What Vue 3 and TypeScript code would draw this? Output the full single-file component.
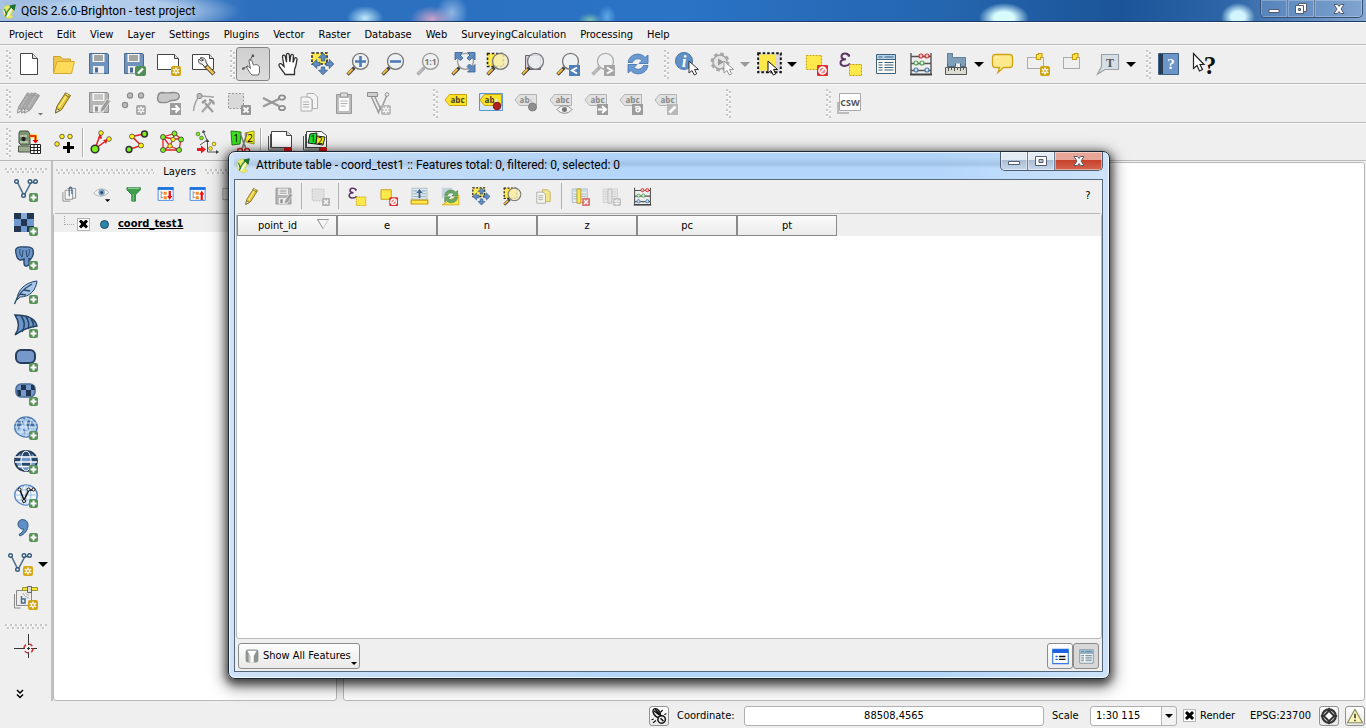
<script setup lang="ts">
import { ref } from 'vue'

interface Tool {
  icon: string
  label: string
  arrow?: boolean
  dim?: boolean
  active?: boolean
  sep?: boolean
}

const SANS = 'font-family="Open Sans, sans-serif"'

// Small badges placed in the bottom right corner of a 24px icon
const plus = '<rect x="15" y="15" width="9" height="9" rx="2" fill="#579157"/><path d="M19.500 16.500v6M16.500 19.500h6" stroke="#fff" stroke-width="2"/>'
const star = (c: string) =>
  `<rect x="14" y="14" width="10" height="10" rx="2" fill="${c}"/><path d="M19 15.500v7M15.800 17.200l6.400 3.600M22.200 17.200l-6.400 3.600" stroke="#fff" stroke-width="1.500"/><circle cx="19" cy="19" r="1" fill="${c}"/>`
const cross = (c: string) =>
  `<rect x="14" y="14" width="10" height="10" rx="1" fill="${c}"/><path d="M16.500 16.500l5 5M21.500 16.500l-5 5" stroke="#fff" stroke-width="1.800"/>`
const forbid =
  '<rect x="13" y="13" width="11" height="11" rx="1" fill="#dc3030"/><circle cx="18.500" cy="18.500" r="3.600" fill="#ee8a8a" stroke="#fff" stroke-width="1.500"/><path d="M16 21l5-5" stroke="#fff" stroke-width="1.500"/>'
const cursor = (x: number, y: number, c: string) =>
  `<path transform="translate(${x} ${y})" d="M0 0v12l3-2.500 2.300 4.500 2.400-1.200-2.200-4.300h4z" fill="#fff" stroke="${c}"/>`
const lens = (handle: string, rim: string, inner = '', fill = '#eef1f1') =>
  `<path d="M8.500 15.500L1.500 22.500" stroke="#333" stroke-width="3.400" opacity="${handle === '#bbb' ? 0.35 : 0.9}"/><path d="M6.500 17L1.800 21.800" stroke="${handle}" stroke-width="2"/><circle cx="14.500" cy="9.300" r="8" fill="${fill}" fill-opacity=".82" stroke="${rim}" stroke-width="1.300"/>${inner}`
const arrows4 = (c: string, o: string) => {
  const a = 'M0-10.800l4.500 4.600h-2.800v3.200h-3.400v-3.200h-2.800z'
  return [0, 90, 180, 270].map(r => `<path transform="translate(12 12) rotate(${r})" d="${a}" fill="${c}" stroke="${o}" stroke-width=".8"/>`).join('')
}
const pencil = (c: string, l: string, o: string) =>
  `<path d="M4.500 22l1.300-6.500L14.500 1.800l5 2.700-9 14.200z" fill="${c}" stroke="${o}"/><path d="M8 16.500L16.500 3" stroke="${l}" stroke-width="1.600"/><path d="M4.500 22l.9-4.700 3.500 2.100z" fill="#eee" stroke="${o}"/><path d="M13.500 3.500l4.700 2.700" stroke="${o}"/>`
const floppy = (c: string, d: string, lab: string) =>
  `<path d="M2.500 1.500h18l1 1v19h-19z" fill="${c}" stroke="${d}"/><path d="M5.500 2h12v8h-12z" fill="#f6f6f3"/><path d="M7 4h9M7 6h9M7 8h9" stroke="${lab}"/><path d="M6 14h11v7.500H6z" fill="#eee"/><path d="M8 15.500h3v5H8z" fill="${d}"/>`
const tag = (c: string, o: string, t: string, s: string, shown = 'abc') =>
  `<path d="M1 9L5.500 3.500h17v11h-17z" fill="${c}" stroke="${o}"/><text x="${shown === 'abc' ? 13.500 : 10.500}" y="11.500" font-size="8" font-weight="700" text-anchor="middle" fill="${t}" ${SANS}>${shown}</text>${s}`
const pages = (c: string, f: string) =>
  `<path d="M4 6h8l3 3v11H4z" fill="${f}" stroke="${c}"/><path d="M10 2.500h7l3.500 3.500v11.500H15.500V9l-3-3H10z" fill="${f}" stroke="${c}"/><path d="M6 11h6M6 13.500h6M6 16h6" stroke="${c}"/>`
const vee = '<path d="M3.500 4.500L10 17.500 17 4.500H21" fill="none" stroke="#4d6b88" stroke-width="1.500"/><g fill="#fff" stroke="#33587c" stroke-width="1.400"><circle cx="2.500" cy="3.500" r="1.800"/><circle cx="9.500" cy="17.500" r="1.800"/><circle cx="16" cy="3.500" r="1.800"/><circle cx="21.500" cy="3.500" r="1.800"/></g>'
const abacus = '<path d="M2 1v21M22 1v21M2 4.500h20M2 11.500h20M2 18.500h20" fill="none" stroke="#555" stroke-width="1.400"/><path d="M1 22.500h22" stroke="#444" stroke-width="2"/><g stroke-width="1.200"><g fill="#f8caca" stroke="#c33"><circle cx="12" cy="4" r="2"/><circle cx="18" cy="4" r="2"/></g><g fill="#dbf3d8" stroke="#5a9f58"><circle cx="7" cy="11" r="2"/><circle cx="13" cy="11" r="2"/></g><g fill="#cfe2f2" stroke="#4d7ba3"><circle cx="7" cy="18" r="2"/><circle cx="18" cy="18" r="2"/></g></g>'
const tableIcon = (h: string, c: string) =>
  `<path d="M2.500 2.500h19v19h-19z" fill="#fbfbf8" stroke="${c}"/><path d="M3 3h18v4H3z" fill="${h}"/><path d="M4.500 5h4M10.500 5h9" stroke="${c}"/><path d="M3 7.500h18" stroke="${c}"/><path d="M4.500 10.500h4M10.500 10.500h9M4.500 13h4M10.500 13h9M4.500 15.500h4M10.500 15.500h9M4.500 18h4M10.500 18h9" stroke="${c}" stroke-width="1.200"/>`
const epsilon = '<path d="M10 3.500C8 .500 2.500 1 2.500 4.500c0 2 2 2.800 4.500 2.800-3 0-5.500 1-5.500 3.500 0 4 7 4 9.500.700" fill="none" stroke="#5c3566" stroke-width="2"/><circle cx="9.800" cy="3.600" r="1.300" fill="#5c3566"/>'
const swirl = (c: string, d: string) =>
  `<path d="M2 10.500C3 4 9 1 14.500 2.500c2 .5 3.500 1.500 4.500 3L22 3v8.500h-9l3-3c-3-3-8-2-9.500 2z" fill="${c}" stroke="${d}" stroke-width=".8"/><path d="M22 13.500c-1 6.500-7 9.500-12.500 8-2-.5-3.500-1.500-4.500-3L2 21v-8.500h9l-3 3c3 3 8 2 9.500-2z" fill="${c}" stroke="${d}" stroke-width=".8"/>`
const nodes = (pts: number[][], c: string, r: number, w = 1) =>
  pts.map(p => `<circle cx="${p[0]}" cy="${p[1]}" r="${r}" fill="${c}" stroke="#333" stroke-width="${w}"/>`).join('')
const globe = (f: string, s: string, lines: string) =>
  `<ellipse cx="12" cy="11" rx="11.300" ry="10" fill="${f}" stroke="${s}" stroke-width="1.400"/><path d="M1 11h22M3 6h18M3 16h18M12 1v20" stroke="${lines}" fill="none"/><ellipse cx="12" cy="11" rx="5" ry="10" fill="none" stroke="${lines}"/>`
const G = '#a9a9a9'
const GD = '#8a8a8a'

const icons: Record<string, string> = {
  qgis: '<path d="M3 11c0-6 5-10 11-9l4 3c2 4 1 8-2 12l4 3-4 3c-7 1-13-4-13-12z" fill="#e6ec6a" stroke="#c3ca4c"/><path d="M5 10c1 4 2 8 5 10 3-4 4-9 8-13" fill="none" stroke="#fff" stroke-width="2"/><path d="M5 8c2 1 2 6 4 10M7 20c2-7 6-13 11-16" fill="none" stroke="#2c8440" stroke-width="2.200"/><path d="M14 3l9-2-2 9z" fill="#157a2c" stroke="#0b4a18"/>',
  newDoc: '<path d="M3.500 1.500h12l5 5v16h-17z" fill="#fff" stroke="#444"/><path d="M15.500 1.500v5h5" fill="#ddd" stroke="#444"/>',
  open: '<path d="M1.500 21V4.500h7l2 2.500h8v3" fill="#efc64c" stroke="#cf9f2a"/><path d="M1.500 21.500L5 9.500h17.500l-3 12z" fill="#ffdb59" stroke="#d9a932"/>',
  save: floppy('#7093bd', '#4a6a8f', '#555'),
  saveAs: floppy('#7093bd', '#4a6a8f', '#555') + '<rect x="13" y="14" width="11" height="10" rx="2" fill="#4e8f55"/><path d="M16 21.500l5-5" stroke="#fff" stroke-width="2.300"/>',
  composer: '<path d="M.5 2.500h17l4 4v11H.500z" fill="#fff" stroke="#444"/><path d="M17.500 2.500v4h4" fill="#ddd" stroke="#444"/>' + star('#cfa413'),
  composerMgr: '<path d="M.5 2.500h17l4 4v11H.500z" fill="#fff" stroke="#444"/><path d="M17.500 2.500v4h4" fill="#ddd" stroke="#444"/><path d="M13 13l9 9" stroke="#544" stroke-width="4.500"/><path d="M14.500 14.500l7 7" stroke="#e7c04e" stroke-width="2.500"/><path d="M8 6c2-1 6 0 6 4l1.500 3-2.500 2-3-3c-3 0-4-2-3-5l2.500 2 2-1z" fill="#eee" stroke="#444"/>',
  touch: '<path d="M11 23c-2-2-4-5-5.500-8 2-1 3 0 4 1.500L8 9c-.5-2 2-2.500 2.600-.8L12.500 13c3-1 6 0 6 3v4l-1 3z" fill="#fff" stroke="#666"/><path d="M1 17.500l6-4M9 9l3-7" stroke="#666"/><circle cx="2.500" cy="16.500" r="1.200" fill="#555"/><circle cx="12" cy="4" r="1.200" fill="#555"/>',
  hand: '<path d="M8 22.500c-1-3-5-6-6-9-.4-2 2-2.500 3-1l2 2L5.500 5c-.3-2 2.200-2.500 2.800-.5L9.500 10V2.800c0-2 2.700-2 2.800 0L12.800 10l1-6.500c.4-1.800 2.800-1.400 2.600.4L16 10.500l1.500-4c.7-1.500 2.900-.8 2.500 1-.8 4-.8 7-2.500 10v5z" transform="translate(1 0)" fill="#fff" stroke="#333" stroke-width="1.300"/>',
  pan: '<path d="M1 1h15v11H1z" fill="#ffe94a" stroke="#222" stroke-width="1.600" stroke-dasharray="2.500 1.800"/>' + arrows4('#5f8cc4', '#355b88'),
  zoomIn: lens('#f0b93c', '#777', '<path d="M14.500 4v11M9 9.500h11" stroke="#4d7ab5" stroke-width="2.600"/>'),
  zoomOut: lens('#f0b93c', '#777', '<path d="M9 9.500h11" stroke="#4d7ab5" stroke-width="2.600"/>'),
  zoomNative: lens('#bbb', '#999', `<text x="14.500" y="12.500" font-size="8.500" font-weight="700" text-anchor="middle" fill="#777" ${SANS}>1:1</text>`),
  zoomFull: lens('#f0b93c', '#999') + '<path d="M4 .5h7.500L9 3l3 3-2.500 2.500-3-3L4 8zM24 .5V8l-2.500-2.500-3 3L16 6l3-3L16.500.500zM24 20h-7.500l2.500-2.500-3-3 2.500-2.500 3 3L24 12.500z" fill="#5f8cc4" stroke="#355b88" stroke-width=".8"/>',
  zoomSel: '<path d="M1.500 1.500h16v13h-16z" fill="#ffe94a" stroke="#222" stroke-width="1.600" stroke-dasharray="2.500 1.800"/>' + lens('#f0b93c', '#777', '', '#f7efc0'),
  zoomLayer: '<path d="M4.500 3.500h15v14h-15z" fill="#d8cdda" stroke="#70597a"/>' + lens('#f0b93c', '#777'),
  zoomLast: lens('#f0b93c', '#777') + '<rect x="13" y="13" width="11" height="11" fill="#4f7fb8"/><path d="M21 15.500l-5 3 5 3" stroke="#fff" stroke-width="2" fill="none"/>',
  zoomNext: lens('#bbb', '#aaa') + '<rect x="13" y="13" width="11" height="11" fill="#a5a5a5"/><path d="M16 15.500l5 3-5 3" stroke="#fff" stroke-width="2" fill="none"/>',
  refresh: swirl('#6c9ad0', '#3f72ae'),
  identify: '<circle cx="9" cy="9" r="8.500" fill="#6190c6" stroke="#4677ad"/><text x="9" y="15" font-size="17" font-style="italic" font-weight="700" text-anchor="middle" fill="#fff" font-family="Liberation Serif, serif">i</text>' + cursor(14, 9, '#333'),
  action: '<circle cx="10" cy="10" r="8" fill="none" stroke="#aaa" stroke-width="3" stroke-dasharray="3.600 2.680"/><circle cx="10" cy="10" r="7" fill="#e4e4e4" stroke="#a2a2a2" stroke-width="1.500"/><path d="M8 6.500l6 3.500-6 3.500z" fill="#999"/>' + cursor(14, 9, '#999'),
  select: '<path d="M1.200 1.200h22.600v19H1.200z" fill="#d8d8d8" stroke="#111" stroke-width="2" stroke-dasharray="2.500 2"/><path d="M2.500 2.500H18v16H2.500z" fill="#ffe94a"/>' + cursor(11, 9, '#111'),
  deselect: '<path d="M2.500 3.500h15v14h-15z" fill="#ffe94a" stroke="#d0a80e" stroke-width="1.200" stroke-dasharray="2 1"/>' + forbid,
  expr: epsilon + '<path d="M10.500 12.500h12v11h-12z" fill="#ffe94a" stroke="#c79c12" stroke-dasharray="2 1"/>',
  table: tableIcon('#b3d2ee', '#3f6079'),
  abacus,
  measure: '<path d="M3.500 1.500h5v4h13v9h-5v-4h-5v4h-8z" fill="#7d9fba" stroke="#4a6479"/><path d="M3.500 1.500h5v4h13v6h-18z" fill="#7d9fba"/><path d="M1.500 15.500h21v7h-21z" fill="#dcdcd0" stroke="#555"/><path d="M4.500 16v3M7.500 16v2M10.500 16v3M13.500 16v2M16.500 16v3M19.500 16v2" stroke="#555"/>',
  tips: '<path d="M4.500 2.500h14c2 0 3 1 3 3v7c0 2-1 3-3 3h-6l-5.500 5 1.500-5h-4c-2 0-3-1-3-3v-7c0-2 1-3 3-3z" fill="#fbe98c" stroke="#cfa316" stroke-width="1.300"/><path d="M4 7c0-1.500 1-2 2.500-2" stroke="#fff" fill="none"/>',
  newMark: '<path d="M1.500 5.500h16v11h-16z" fill="none" stroke="#666" stroke-dasharray="1 1"/><path d="M10.500 7.500v-5h2v-1h3.500v4h-1.500v2z" fill="#ffe94a" stroke="#c79c12" stroke-width="1.200"/>' + star('#cfa413'),
  marks: '<path d="M2.500 5.500h16v11h-16z" fill="none" stroke="#666" stroke-dasharray="1 1"/><path d="M11.500 7.500v-5h2v-1H17v4h-1.500v2z" fill="#ffe94a" stroke="#c79c12" stroke-width="1.200"/>',
  annot: '<path d="M5.500 2.500h17v15H9l-7.500 4.500 4-7.500z" fill="#d6dfe6" stroke="#9aa2a8" stroke-width="1.200"/><text x="14" y="14.500" font-size="12" font-weight="700" text-anchor="middle" fill="#555" font-family="Liberation Serif, serif">T</text>',
  help: '<path d="M1.500 1.500h20v21h-20z" fill="#6d96c8" stroke="#3e5f86"/><path d="M2 2h4v20H2z" fill="#273a4f"/><text x="14" y="17" font-size="15" text-anchor="middle" fill="#fff" font-weight="700" font-family="Liberation Serif, serif">?</text>',
  whats: '<path d="M1.500 1.500v15l3.500-3 2.500 5.500 3-1.500-2.500-5h4z" fill="#fff" stroke="#222" stroke-width="1.200"/><text x="18" y="22" font-size="25" text-anchor="middle" fill="#111" font-weight="700" font-family="Liberation Serif, serif">?</text>',
  edits: '<g transform="translate(-4 0)">' + pencil('#a8a8a8', '#b8b8b8', '#999') + '</g><g>' + pencil('#a8a8a8', '#b8b8b8', '#999') + '</g><g transform="translate(3 0)">' + pencil('#a8a8a8', '#b8b8b8', '#999') + '</g><path d="M21 22h5l-2.500 2.500z" fill="#777"/>',
  edit: '<g transform="translate(-1 0)">' + pencil('#e2c22e', '#fbe98c', '#7a6a22') + '</g>',
  saveEdits: floppy('#b5b5b5', '#8e8e8e', '#999') + '<path d="M13 22l1-5 6-9 3.500 2-6 9z" fill="#9b9b9b" stroke="#dedede"/>',
  addPt: '<g fill="#bcbcbc" stroke="#8c8c8c" stroke-width="1.200"><circle cx="8" cy="4.500" r="2.600"/><circle cx="19" cy="4.500" r="2.600"/><circle cx="3" cy="14" r="2.600"/></g>' + star(G),
  move: '<path d="M5 1.500c4 1 8 0 12 0s6 2 5 5-4 3-7 3-3 2-6 2-7 1-8-2 0-8 4-8z" fill="#c8c8c8" stroke="#8a8a8a" stroke-width="1.400"/><rect x="13" y="12" width="11" height="12" fill="#9c9c9c"/><path d="M14.500 18h7M18.500 14.500l3.500 3.500-3.500 3.500" stroke="#fff" stroke-width="2" fill="none"/>',
  nodeTool: '<path d="M1.500 20C2 14 5 8 7 5.500M9 5l13 1" fill="none" stroke="#a5a5a5" stroke-width="1.500"/><rect x="5" y="2.500" width="5" height="5" rx="2" fill="#bbb" stroke="#8a8a8a"/><path d="M19 11l-9 10" stroke="#aaa" stroke-width="2.500"/><path d="M13 12l8 9" stroke="#999" stroke-width="2"/><path d="M17 9c3 0 5 2 4.500 4.500M10 12l4-3" stroke="#999" stroke-width="2.500" fill="none"/>',
  delSel: '<path d="M1.500 2.500h15v15h-15z" fill="#d9d9d9" stroke="#999" stroke-dasharray="2 1.500"/>' + cross('#969696'),
  cut: '<path d="M1 7l16 8M1 15.500l17-8" stroke="#999" stroke-width="2.400"/><g fill="none" stroke="#8d8d8d" stroke-width="1.800"><ellipse cx="20" cy="6.500" rx="3" ry="2.200"/><ellipse cx="20" cy="17" rx="3" ry="2.200"/></g>',
  copy: pages('#b0b0b0', '#f4f4f4'),
  paste: '<path d="M4.500 3.500h15v19h-15z" fill="#bdbdbd" stroke="#999"/><path d="M7 7h10v13H7z" fill="#fafafa"/><path d="M8.500 2h7v4h-7z" fill="#ddd" stroke="#999"/><path d="M8.500 10h7M8.500 12.500h7M8.500 15h5" stroke="#b5b5b5"/>',
  cad: '<path d="M4.500 6l7 15.500L14 15M8 6l6 13M20 4l-5 12" fill="none" stroke="#9c9c9c" stroke-width="1.600"/><path d="M.500 1.500h10v4H.500z" fill="#cfcfcf" stroke="#8d8d8d"/><circle cx="20" cy="3.500" r="1.800" fill="#eee" stroke="#8d8d8d"/>' + star('#b9b9b9'),
  label: tag('#fbe32b', '#c9a50c', '#4a4020', ''),
  labelPin: '<path d="M.5 2.500h23v17h-23z" fill="#d9e6f5" stroke="#5b94d6"/>' + tag('#fbe32b', '#c9a50c', '#4a4020', '<path d="M17 8v7" stroke="#eee" stroke-width="2.500"/><circle cx="18" cy="15" r="3.800" fill="#b02121" stroke="#7d1717"/>', 'ab'),
  labelPinD: tag('#e2e2e2', '#b3b3b3', '#888', '<path d="M17 8v7" stroke="#ccc" stroke-width="2.500"/><circle cx="18.500" cy="16" r="4" fill="#8f8f8f" stroke="#7f7f7f"/>', 'ab'),
  labelEye: tag('#e2e2e2', '#b3b3b3', '#888', '<path d="M8 18.500c4-5 11-5 15 0-4 5-11 5-15 0z" fill="#f3f3f3" stroke="#888"/><circle cx="15.500" cy="18.500" r="2.500" fill="#777"/>'),
  labelMove: tag('#e2e2e2', '#b3b3b3', '#888', '<rect x="13" y="13" width="11" height="11" fill="#9c9c9c"/><path d="M14 18.500h7M18 15l4 3.500-4 3.500" stroke="#fff" stroke-width="2" fill="none"/>'),
  labelRot: tag('#e2e2e2', '#b3b3b3', '#888', '<rect x="13" y="13" width="11" height="11" fill="#9c9c9c"/><path d="M16 16.500c3-2.500 6 0 5 2.500s-4 2-4 0 3-2 4 1" stroke="#fff" stroke-width="1.500" fill="none"/>'),
  labelEdit: tag('#e2e2e2', '#b3b3b3', '#888', '<rect x="13" y="13" width="11" height="11" fill="#b9b9b9"/><path d="M15.500 21.500l6-6" stroke="#fff" stroke-width="2.600"/>'),
  csw: `<path d="M1 11v11h11" fill="none" stroke="#bbb" stroke-width="2"/><path d="M2.500 2.500h21v17h-21z" fill="#fff" stroke="#aaa"/><text x="13" y="14.500" font-size="9" font-weight="700" text-anchor="middle" fill="#555" ${SANS}>CSW</text>`,
  station: '<path d="M3 1h8l2 3v10l-3 1H4l-2-2V3z" fill="#7f9472" stroke="#445240"/><path d="M1.500 16h12v6h-12z" fill="#9aab8e" stroke="#4d5b48"/><path d="M3 6h7M3 12h8" stroke="#c7d3bc" stroke-width="1.500"/><circle cx="6.500" cy="9" r="2.200" fill="#222"/><path d="M13 6h5.500v5" fill="none" stroke="#ffd21a" stroke-width="3"/><path d="M13 6h5.500v4" fill="none" stroke="#e00" stroke-width="1.600"/><path d="M15.500 10h6l-3 3.500z" fill="#e00"/><path d="M13.500 14.500h10v9h-10z" fill="#fff" stroke="#222"/><path d="M13 17.500h11M13 20.500h11M17 14v10M20.500 14v10" stroke="#222"/>',
  points: '<path d="M16.500 12v11M11 17.500h11" stroke="#000" stroke-width="3"/>' + nodes([[5, 14], [10, 6.500], [18, 6.500]], '#ffee1a', 2.300, 0.7),
  radial: '<path d="M5 19L10 5M5 19L17 10" stroke="#e82020" stroke-width="1.500"/><path d="M8 8l3-4 1 5zM13 10l5-1-2 5z" fill="#e82020"/>' + nodes([[11, 3], [19, 9]], '#ffee1a', 2.300, 0.7) + nodes([[5, 19]], '#7cf01a', 3.800, 1.500),
  traverse: '<path d="M19 4L7 6.500l9 9L4 19.500" fill="none" stroke="#e82020" stroke-width="1.500"/>' + nodes([[7, 6.500], [16, 15.500]], '#ffee1a', 2.500, 0.7) + nodes([[19.500, 4], [4, 19.500]], '#7cf01a', 2.900, 1.500),
  network: '<path d="M3 7l11.500-3.500L21 9l-2 11H3zM3 7l10 2 8 0M13 9l-3 7 9 4M3 20l7-4L3 7M14.500 3.500L13 9" fill="none" stroke="#e82020" stroke-width="1.300"/>' + nodes([[13, 9.500], [10, 16]], '#ffee1a', 2.200, 0.6) + nodes([[3, 7], [14.500, 3.500], [21, 9.500], [19, 20], [3, 20]], '#7cf01a', 2.500, 0.8),
  transform: '<path d="M8 1l4 9-7 5M12.500 11v11H23" fill="none" stroke="#555"/><path d="M10.500 12l2-3 2 3zM21 20l3 2-3 2zM7 3l1-3 3 2z" fill="#444"/><path d="M2 18h4v-2.500l5 4-5 4V21H2z" fill="#e02020"/>' + nodes([[3, 4], [6.500, 8]], '#7cf01a', 1.900, 0.5) + nodes([[19, 14], [15.500, 18.500]], '#ffee1a', 1.900, 0.5),
  split: `<path d="M1 1l10 1-1 12-8 1z" fill="#39e01e" stroke="#267a18"/><path d="M15 3l9-2v13l-8-2z" fill="#f4ee1e" stroke="#99951a"/><path d="M10 3l6 16M17 3l-5 16" stroke="#777" stroke-width="1.500"/><circle cx="10" cy="21" r="2.500" fill="none" stroke="#d22" stroke-width="1.500"/><circle cx="17" cy="21" r="2.500" fill="none" stroke="#d22" stroke-width="1.500"/><text x="6" y="12" font-size="10" text-anchor="middle" ${SANS}>1</text><text x="20" y="12" font-size="10" text-anchor="middle" ${SANS}>2</text>`,
  plot: '<path d="M.500 6v14h19M2.500 4v14h19" fill="none" stroke="#555"/><path d="M3.500 1.500h15l5 4v12h-20z" fill="#fff" stroke="#444"/><path d="M18.500 1.500v4h5" fill="#ddd" stroke="#444"/><path d="M20.500 17v7M16 19.500h8" stroke="#e01010" stroke-width="3"/>',
  batch: `<path d="M.500 6v14h19M2.500 4v14h19" fill="none" stroke="#555"/><path d="M3.500 1.500h15l5 4v12h-20z" fill="#fff" stroke="#444"/><path d="M7 4l7-1-1 11-8-1z" fill="#19e030" stroke="#222"/><path d="M14 6l8 1-2 8-7-1z" fill="#f4ee1e" stroke="#222"/><text x="10" y="12" font-size="9" text-anchor="middle" ${SANS}>1</text><text x="17" y="14" font-size="9" text-anchor="middle" ${SANS}>2</text><path d="M20.500 17v7M16 19.500h8" stroke="#e01010" stroke-width="3"/>`,
  vector: vee + plus,
  raster: '<path d="M0 1h20v19H0z" fill="#6f98cc"/><path d="M0 1h7v6H0zM13 1h7v6h-7zM7 7h6v7H7zM0 14h7v6H0zM13 14h7v6h-7z" fill="#22364f"/><path d="M7 1h6v6H7z" fill="#86abd8"/>' + plus,
  postgis: '<path d="M2 3c2-3 5-2 8-2s8-1 9 3-1 8-3 10l-1-2v6c-1 3-5 3-5-1v-4c-4 2-6 1-7-2s-2-6-1-8z" fill="#6b95c8" stroke="#29486b" stroke-width="1.400"/><path d="M6 3c-1 4 0 6 2 8l1-7M15 3c1 3 0 6-2 8l-1-7" fill="none" stroke="#29486b"/>' + plus,
  spatialite: '<path d="M3 20C3 10 12 2 23 1c-1 9-7 16-17 16z" fill="#a9c6ea" stroke="#29486b"/><path d="M.500 24C3 16 9 9 18 4M6 14l6 1M10 10l6 1" fill="none" stroke="#29486b" stroke-width="1.300"/>' + plus,
  mssql: '<path d="M1 1c9 0 20 2 22 11-7 1-14 3-22 9 5-7 4-14 0-20z" fill="#6b95c8" stroke="#22405f" stroke-width="1.400"/><path d="M7 2c4 5 4 11 1 16M12 3c4 5 3 9 2 12M17 5c2 3 3 6 2 8" fill="none" stroke="#22405f" stroke-width="1.400"/>' + plus,
  oracle: '<rect x="2" y="2" width="19" height="13" rx="5" fill="#7599ca" stroke="#253e5c" stroke-width="2"/>' + plus,
  georaster: '<rect x="2" y="2" width="19" height="13" rx="5" fill="#7599ca" stroke="#4a6d99" stroke-width="1.600"/><path d="M7 3h5v5H7zM17 3h3l1 5h-4zM3 8h4v6H4zM12 8h5v6h-5z" fill="#22364f"/>' + plus,
  wms: '<ellipse cx="12" cy="11" rx="11.300" ry="10" fill="#a9c7ea" stroke="#4f7cb0" stroke-width="1.400"/><path d="M4 5h5l1 3-4 2-1 4-2-4zM14 4l5 2 2 5-4-1-2 4-3-5z" fill="#3f6b9f"/><path d="M9 13l4 1-2 5zM8 2h4l1 3z" fill="#5582b8"/><path d="M1 7h22M1 11h22M3 16h18M12 1v20M6 3c3 5 3 11 0 16M18 3c-3 5-3 11 0 16" stroke="#e2ecf8" stroke-width=".9" fill="none"/>' + plus,
  wcs: '<ellipse cx="12" cy="11" rx="11" ry="10" fill="#6f98cc" stroke="#22364f" stroke-width="1.800"/><path d="M7 1.500h10l1 5H6zM1.500 7h5v5h-5zM17.500 7h5v5h-5zM7 12h10v4H7z" fill="#29486b"/><path d="M1 7h22M1 12h22M4 16.500h16" stroke="#fff" stroke-width="1.500"/><ellipse cx="12" cy="11" rx="5" ry="10" fill="none" stroke="#fff"/>' + plus,
  wfs: globe('#f3f8fd', '#5c8cc7', '#9dbde2') + '<path d="M6 6l4 10 5-10h4" fill="none" stroke="#111" stroke-width="1.500"/><g fill="#fff" stroke="#111"><circle cx="5.500" cy="5.500" r="1.500"/><circle cx="10" cy="17" r="1.500"/><circle cx="14.500" cy="5.500" r="1.500"/><circle cx="19.500" cy="5.500" r="1.500"/></g>' + plus,
  csv: '<path d="M4 6c0-6 10-6 10 1 0 5-3 9-8 11l-1-1.500c3-2 4-3.500 4.500-5.500C6.500 11.500 4 9 4 6z" fill="#5f8fc9" stroke="#33587c"/>' + plus,
  newVec: '<g transform="translate(-6 0)">' + vee + '</g><g transform="translate(-5 0)">' + star('#d6a816') + '</g>',
  gps: '<path d="M.500 8v14h6" fill="none" stroke="#888"/><path d="M2.500 4.500h15v15h-15z" fill="#eee" stroke="#888"/><path d="M7.500 10v7h3.500v-4H8" fill="none" stroke="#4a6b8b" stroke-width="1.500"/><path d="M9 7c1 3 3 4 6 5M12 7c0 1 1 2 3 2" fill="none" stroke="#aaa"/><path d="M8.500 1.500h15v3h-15z" fill="#efe838" stroke="#9b9625"/><path d="M13.500.500h4v6h-4z" fill="#ddd" stroke="#666"/>' + star('#cfa413'),
  crosshair: '<path d="M0 12.500h11M17 12.500h6M14.500-2v11M14.500 16v6" stroke="#333"/><circle cx="14.500" cy="12.500" r="4.500" fill="none" stroke="#c33" stroke-width="1.600" stroke-dasharray="4 3"/><path d="M14.500 11v3M13 12.500h3" stroke="#333"/>',
  group: '<g fill="none" stroke="#777"><path d="M2.500 9.500v12h10"/><path d="M5.500 7v12h10V7z" fill="#f6f6f6"/><path d="M8.500 4.500h11v13h-4"/></g><path d="M11 15V5c0-3 3.500-3 3.500 0v7" fill="none" stroke="#3f6f9f" stroke-width="1.500"/>',
  eye: '<path d="M1 11c5-7 14-8 20-1-6 6-14 7-20 1z" fill="#eef2f5" stroke="#b5b5b5" stroke-width="1.300"/><circle cx="11.500" cy="10" r="4.200" fill="#7da0c6"/><circle cx="11.500" cy="10" r="1.800" fill="#2b3e55"/><path d="M16 19h7l-3.500 3.500z" fill="#000"/>',
  filter: '<path d="M2.500 3.500h18v3L14 13v8.500h-5V13L2.500 6.500z" fill="#3f9d4e" stroke="#2a7838"/><path d="M4 4.500h15" stroke="#8fd09a" stroke-width="1.500"/><path d="M11 12v9" stroke="#8fd09a"/>',
  expand: '<path d="M1.500 3.500h20v17h-20z" fill="#fff" stroke="#1a6fe0"/><path d="M1 3h21v3.500H1z" fill="#1a6fe0"/><path d="M5.500 8v10M5.500 10.500h3M5.500 16.500h3" fill="none" stroke="#777"/><path d="M9 9h4v4H9zM9 15h4v4H9z" fill="#f08a24"/><path d="M17 8v8" stroke="#e11" stroke-width="3"/><path d="M13.500 14.500h7L17 19.500z" fill="#e11"/>',
  collapse: '<path d="M1.500 3.500h20v17h-20z" fill="#fff" stroke="#1a6fe0"/><path d="M1 3h21v3.500H1z" fill="#1a6fe0"/><path d="M5.500 8v10M5.500 10.500h3M5.500 16.500h3" fill="none" stroke="#777"/><path d="M9 9h4v4H9zM9 15h4v4H9z" fill="#f08a24"/><path d="M17 11v9" stroke="#e11" stroke-width="3"/><path d="M13.500 12.500h7L17 7.500z" fill="#e11"/>',
  remove: '<path d="M2.500 4.500h14v15h-14z" fill="#eee" stroke="#999"/>',
  up: '<path d="M2.500 1.500h19v14h-19z" fill="#dfe8ee" stroke="#9fb4c2"/><path d="M4 5h5M4 8.500h5M15 5h5M15 8.500h5M4 12h16" stroke="#9fb4c2" stroke-width="1.500"/><path d="M12 14V5" stroke="#3d6591" stroke-width="2.500"/><path d="M8 7.500L12 2.500l4 5z" fill="#3d6591"/><path d="M1.500 16.500h21v5h-21z" fill="#ffe94a" stroke="#c79c12" stroke-width="1.500"/>',
  invert: '<path d="M1 1h14L1 15z" fill="#c6d3dc"/><path d="M1.500 22.500h21V10z" fill="#ffe94a" stroke="#d0a80e"/><g transform="translate(3 2) scale(.82)">' + swirl('#69a867', '#3d7a41') + '</g>',
  deselectT: '<path d="M2.500 3.500h13v12h-13z" fill="#ffe94a" stroke="#c79c12" stroke-width="1.200"/>' + forbid,
  copyT: '<path d="M10.500 3.500h7l3 3v12h-10z" fill="#f4e48a" stroke="#b9a95a"/><path d="M3.500 6.500h8l3 3v11h-11z" fill="#f4f4f0" stroke="#a0a59a"/><path d="M5.500 11h6M5.500 13.500h6M5.500 16h6" stroke="#a0a59a"/>',
  delCol: '<path d="M1.500 2.500h19v17h-19z" fill="#e7ecef" stroke="#9fb0bb"/><path d="M2 3h18v3H2z" fill="#c6d8e6"/><path d="M3 9h16M3 12h16M3 15h16" stroke="#9fb0bb"/><path d="M7.500 2.500h5v18h-5z" fill="#ffe94a" stroke="#a9912a"/>' + cross('#dd7474'),
  newCol: '<path d="M1.500 2.500h18v17h-18z" fill="#e4e4e4" stroke="#bbb"/><path d="M3 9h15M3 12h15M3 15h15M3 6h15" stroke="#bbb"/><path d="M7.500 2.500h5v18h-5z" fill="#ddd" stroke="#999"/>' + star('#a9a9a9'),
  funnel: '<rect x="1" y="1" width="22" height="22" rx="4" fill="#8f938f"/><path d="M4 3h16l-5 9v11H9V12z" fill="#fff"/><path d="M9 23V12L6 6v17z" fill="#c5c9c5"/>',
  form: '<path d="M1 2h22v20H1z" fill="#fff" stroke="#3b7ae0" stroke-width="1.600"/><path d="M1 2h22v5H1z" fill="#1b5fe0"/><path d="M5 12h3M5 16h3" stroke="#1b5fe0" stroke-width="2"/><path d="M10 12h9M10 16h9" stroke="#111" stroke-width="2"/>',
  tableView: tableIcon('#8fb6cc', '#58798c'),
  satellite: '<g fill="#eee" stroke="#111" stroke-width="2"><ellipse cx="9" cy="8" rx="4" ry="6.500" transform="rotate(-35 9 8)"/><circle cx="15.500" cy="16.500" r="5"/></g><path d="M5 5l8 6M7 3l6 7M14 15l4 4" stroke="#111" stroke-width="2"/><path d="M14 7l3-3M19 10l3-1M2 17l3-1M4 21l4-3" stroke="#111" stroke-width="1.500"/>',
  proj: '<circle cx="12" cy="12" r="9" fill="#ddd" stroke="#333" stroke-width="3"/><path d="M12 1v6M12 17v6M1 12h6M17 12h6" stroke="#333" stroke-width="2"/><path d="M12 5l7 7-7 7-7-7z" fill="#fff" stroke="#333" stroke-width="2.500"/>',
  warn: '<path d="M12 3L22 21H2z" fill="#fbf6b5" stroke="#8d8a68" stroke-width="1.600" stroke-linejoin="round"/><path d="M12 9v6M12 17v2" stroke="#333" stroke-width="2"/>',
}

const menus = ['Project', 'Edit', 'View', 'Layer', 'Settings', 'Plugins', 'Vector', 'Raster', 'Database', 'Web', 'SurveyingCalculation', 'Processing', 'Help']

const t = (icon: string, label: string, extra: Partial<Tool> = {}): Tool => ({ icon, label, ...extra })

const mainBars: Tool[][] = [
  [t('newDoc', 'New'), t('open', 'Open'), t('save', 'Save'), t('saveAs', 'Save As'), t('composer', 'New Print Composer'), t('composerMgr', 'Composer Manager')],
  [t('touch', 'Touch Zoom and Pan', { active: true }), t('hand', 'Pan Map'), t('pan', 'Pan to Selection'), t('zoomIn', 'Zoom In'), t('zoomOut', 'Zoom Out'), t('zoomNative', 'Zoom to Native Resolution'), t('zoomFull', 'Zoom Full'), t('zoomSel', 'Zoom to Selection'), t('zoomLayer', 'Zoom to Layer'), t('zoomLast', 'Zoom Last'), t('zoomNext', 'Zoom Next'), t('refresh', 'Refresh')],
  [t('identify', 'Identify Features'), t('action', 'Run Feature Action', { arrow: true, dim: true }), t('select', 'Select Features', { arrow: true }), t('deselect', 'Deselect Features'), t('expr', 'Select by Expression'), t('table', 'Open Attribute Table'), t('abacus', 'Field Calculator'), t('measure', 'Measure', { arrow: true }), t('tips', 'Map Tips'), t('newMark', 'New Bookmark'), t('marks', 'Show Bookmarks'), t('annot', 'Text Annotation', { arrow: true })],
  [t('help', 'Help Contents'), t('whats', "What's This?")],
]
const editBar: Tool[] = [t('edits', 'Current Edits'), t('edit', 'Toggle Editing'), t('saveEdits', 'Save Layer Edits'), t('addPt', 'Add Feature'), t('move', 'Move Feature'), t('nodeTool', 'Node Tool'), t('delSel', 'Delete Selected'), t('cut', 'Cut Features'), t('copy', 'Copy Features'), t('paste', 'Paste Features'), t('cad', 'Digitizing')]
const labelBar: Tool[] = [t('label', 'Layer Labeling'), t('labelPin', 'Highlight Pinned Labels'), t('labelPinD', 'Pin Labels'), t('labelEye', 'Show Labels'), t('labelMove', 'Move Label'), t('labelRot', 'Rotate Label'), t('labelEdit', 'Change Label')]
const surveyBar: Tool[] = [t('station', 'Load Fieldbook'), t('points', 'Add Points'), t('radial', 'Single Point Calculations', { sep: true }), t('traverse', 'Traverse'), t('network', 'Network Adjustment'), t('transform', 'Transformation'), t('split', 'Polygon Division'), t('plot', 'Plot by Template', { sep: true }), t('batch', 'Batch Plotting')]
const sideBar: Tool[] = [t('vector', 'Add Vector Layer'), t('raster', 'Add Raster Layer'), t('postgis', 'Add PostGIS Layer'), t('spatialite', 'Add SpatiaLite Layer'), t('mssql', 'Add MSSQL Layer'), t('oracle', 'Add Oracle Layer'), t('georaster', 'Add GeoRaster Layer'), t('wms', 'Add WMS Layer'), t('wcs', 'Add WCS Layer'), t('wfs', 'Add WFS Layer'), t('csv', 'Add Delimited Text Layer'), t('newVec', 'New Layer', { arrow: true }), t('gps', 'GPS Tools')]
const layerBar: Tool[] = [t('group', 'Add Group'), t('eye', 'Visibility'), t('filter', 'Filter Legend'), t('expand', 'Expand All'), t('collapse', 'Collapse All'), t('remove', 'Remove Layer')]
const tableBar: Tool[] = [t('edit', 'Toggle Editing'), t('saveEdits', 'Save Edits'), t('delSel', 'Delete Selected Features', { sep: true, dim: true }), t('expr', 'Select by Expression', { sep: true }), t('deselectT', 'Unselect All'), t('up', 'Move Selection to Top'), t('invert', 'Invert Selection'), t('pan', 'Pan to Selected'), t('zoomSel', 'Zoom to Selected'), t('copyT', 'Copy Rows'), t('delCol', 'Delete Column', { sep: true }), t('newCol', 'New Column', { dim: true }), t('abacus', 'Field Calculator')]
const columns = ['point_id', 'e', 'n', 'z', 'pc', 'pt']

const coordinate = ref('88508,4565')
const scale = ref('1:30 115')
const render = ref(true)
const layerVisible = ref(true)
</script>

<template>
  <div class="window">
    <header class="titlebar">
      <svg class="logo" viewBox="0 0 24 24" v-html="icons.qgis" />
      <h1>QGIS 2.6.0-Brighton - test project</h1>
      <div class="win-buttons main-buttons">
        <button aria-label="Minimize"><svg viewBox="0 0 14 12"><path d="M2 6.500h10v3H2z" fill="#fff" stroke="#555b6e" /></svg></button>
        <button aria-label="Restore"><svg viewBox="0 0 14 12"><path d="M4.500.500h8v8h-8z" fill="#fff" stroke="#555b6e" /><path d="M1.500 2.500h8v8h-8z" fill="#fff" stroke="#555b6e" /><path d="M4.500 5.500h2v2h-2z" fill="#8ea6c6" stroke="#555b6e" /></svg></button>
        <button class="wide" aria-label="Close"><svg viewBox="0 0 14 12"><path d="M2 1.500h3.500L7 3.500l1.500-2H12L9 6l3 4.500H8.500L7 8.500l-1.500 2H2L5 6z" fill="#fff" stroke="#555b6e" /></svg></button>
      </div>
    </header>

    <nav class="menubar">
      <button v-for="m in menus" :key="m">{{ m }}</button>
    </nav>

    <div class="toolbar">
      <div v-for="(bar, i) in mainBars" :key="i" class="group">
        <span class="grip" />
        <template v-for="tool in bar" :key="tool.icon">
          <button class="tool" :class="{ active: tool.active }" :aria-label="tool.label"><svg viewBox="0 0 24 24" v-html="icons[tool.icon]" /></button>
          <button v-if="tool.arrow" class="drop" :class="{ dim: tool.dim }" :aria-label="tool.label + ' options'" />
        </template>
      </div>
    </div>

    <div class="toolbar">
      <div class="group">
        <span class="grip" />
        <button v-for="tool in editBar" :key="tool.icon" class="tool" :aria-label="tool.label"><svg viewBox="0 0 24 24" v-html="icons[tool.icon]" /></button>
      </div>
      <div class="group far">
        <span class="grip" />
        <button v-for="tool in labelBar" :key="tool.icon" class="tool" :aria-label="tool.label"><svg viewBox="0 0 24 24" v-html="icons[tool.icon]" /></button>
      </div>
      <div class="group far empty"><span class="grip" /></div>
      <div class="group flush">
        <span class="grip" />
        <button class="tool" aria-label="MetaSearch"><svg viewBox="0 0 24 24" v-html="icons.csw" /></button>
      </div>
    </div>

    <div class="toolbar last">
      <div class="group">
        <span class="grip" />
        <template v-for="tool in surveyBar" :key="tool.icon">
          <span v-if="tool.sep" class="sep" />
          <button class="tool" :aria-label="tool.label"><svg viewBox="0 0 24 24" v-html="icons[tool.icon]" /></button>
        </template>
      </div>
    </div>

    <main class="work">
      <aside class="side">
        <span class="grip-h" />
        <div v-for="tool in sideBar" :key="tool.icon" class="side-row">
          <button class="side-tool" :aria-label="tool.label"><svg viewBox="0 0 24 24" v-html="icons[tool.icon]" /></button>
          <button v-if="tool.arrow" class="drop" :aria-label="tool.label + ' options'" />
        </div>
        <span class="grip-h lower" />
        <button class="side-tool" aria-label="Coordinate Capture"><svg viewBox="0 0 24 24" v-html="icons.crosshair" /></button>
        <button class="more" aria-label="More tools"><svg viewBox="0 0 8 10"><path d="M1 1l3 3 3-3M1 5.500l3 3 3-3" fill="none" stroke="#000" stroke-width="1.500" /></svg></button>
      </aside>

      <section class="layers">
        <div class="dock-title"><span class="grip-h" /><h2>Layers</h2><span class="grip-h" /><span class="dock-space" /></div>
        <div class="layer-bar">
          <button v-for="tool in layerBar" :key="tool.icon" :aria-label="tool.label"><svg viewBox="0 0 24 24" v-html="icons[tool.icon]" /></button>
        </div>
        <div class="tree">
          <div class="tree-row">
            <span class="branch" />
            <input id="layer-on" v-model="layerVisible" class="check" type="checkbox" />
            <span class="symbol" />
            <label for="layer-on">coord_test1</label>
          </div>
        </div>
      </section>

      <section class="canvas" aria-label="Map canvas" />
    </main>

    <footer class="status">
      <button class="mini" aria-label="Toggle extents"><svg viewBox="0 0 24 24" v-html="icons.satellite" /></button>
      <label class="coord-label" for="coord">Coordinate:</label>
      <input id="coord" v-model="coordinate" class="coord" type="text" />
      <label class="scale-label" for="scale">Scale</label>
      <span class="combo">
        <select id="scale" v-model="scale"><option>1:30 115</option></select>
      </span>
      <input id="render" v-model="render" class="check" type="checkbox" />
      <label class="render-label" for="render">Render</label>
      <span class="epsg">EPSG:23700</span>
      <button class="mini" aria-label="CRS status"><svg viewBox="0 0 24 24" v-html="icons.proj" /></button>
      <button class="mini end" aria-label="Messages"><svg viewBox="0 0 24 24" v-html="icons.warn" /></button>
    </footer>

    <section class="dialog" role="dialog" aria-labelledby="dlg-title">
      <header class="dialog-title">
        <svg class="logo" viewBox="0 0 24 24" v-html="icons.qgis" />
        <h2 id="dlg-title">Attribute table - coord_test1 :: Features total: 0, filtered: 0, selected: 0</h2>
        <div class="win-buttons">
          <button aria-label="Minimize"><svg viewBox="0 0 14 12"><path d="M1.500 6.500h11v3h-11z" fill="#fff" stroke="#555b6e" /></svg></button>
          <button aria-label="Maximize"><svg viewBox="0 0 14 12"><path d="M1.500 1.500h11v9h-11z" fill="#fff" stroke="#555b6e" /><path d="M5 4.500h4v3H5z" fill="#b9c6d8" stroke="#555b6e" /></svg></button>
          <button class="wide close" aria-label="Close"><svg viewBox="0 0 14 12"><path d="M2 1.500h3.500L7 3.500l1.500-2H12L9 6l3 4.500H8.500L7 8.500l-1.500 2H2L5 6z" fill="#fff" stroke="#555b6e" /></svg></button>
        </div>
      </header>
      <div class="client">
        <div class="table-bar">
          <template v-for="tool in tableBar" :key="tool.icon">
            <span v-if="tool.sep" class="sep" />
            <button :class="{ faded: tool.dim }" :aria-label="tool.label"><svg viewBox="0 0 24 24" v-html="icons[tool.icon]" /></button>
          </template>
          <button class="question" aria-label="Help">?</button>
        </div>
        <div class="grid">
          <div class="grid-head">
            <table>
              <thead>
                <tr>
                  <th v-for="(c, i) in columns" :key="c" scope="col">
                    <div class="cell"><span>{{ c }}</span><svg v-if="i === 0" viewBox="0 0 12 10"><path d="M11.500.500L6 9.500.500.500z" fill="#f6f6f6" stroke="#ccc" /><path d="M11.500.500H.500L6 9.500" fill="none" stroke="#999" /></svg></div>
                  </th>
                </tr>
              </thead>
            </table>
          </div>
        </div>
        <div class="dialog-foot">
          <button class="show"><svg viewBox="0 0 24 24" v-html="icons.funnel" /><span>Show All Features</span><i class="corner" /></button>
          <div class="views">
            <button aria-label="Form view"><svg viewBox="0 0 24 24" v-html="icons.form" /></button>
            <button class="on" aria-label="Table view"><svg viewBox="0 0 24 24" v-html="icons.tableView" /></button>
          </div>
        </div>
      </div>
    </section>
  </div>
</template>

<style>
body { margin: 0; }
</style>

<style scoped>
.window { position: relative; box-sizing: border-box; display: flex; flex-direction: column; height: 100vh; min-height: 640px; overflow: hidden; background: #efefef; color: #000; font-family: "DejaVu Sans Condensed", "Noto Sans", sans-serif; font-size: 11px; line-height: 14px; }
.window * { box-sizing: border-box; }
button, input, select { margin: 0; padding: 0; border: 0; background: none; color: inherit; font: inherit; }
svg { display: block; flex: none; overflow: visible; }
h1, h2 { margin: 0; font-family: Roboto, "Open Sans", sans-serif; font-size: 12px; line-height: 16px; font-weight: 400; white-space: nowrap; }

.titlebar { display: flex; align-items: center; flex: none; height: 23px; padding-left: 1px; gap: 5px; border-bottom: 1px solid #f8fafc; box-shadow: inset 0 -1px #1f3b63; background:
  radial-gradient(ellipse 18px 12px at 365px 18px, #bfe9fa, transparent),
  radial-gradient(ellipse 22px 13px at 432px 19px, rgba(219, 169, 201, .9), transparent),
  radial-gradient(ellipse 16px 18px at 452px 13px, rgba(168, 198, 236, .8), transparent),
  radial-gradient(ellipse 12px 7px at 590px 20px, #79bdb2, transparent),
  radial-gradient(ellipse 9px 12px at 607px 17px, #5fa8e8, transparent),
  radial-gradient(ellipse 25px 15px at 1004px 18px, #d8fcff 40%, transparent),
  radial-gradient(ellipse 17px 14px at 1238px 17px, #d2f6ff 40%, transparent),
  radial-gradient(ellipse 120px 22px at 120px 11px, rgba(190, 213, 240, .85) 50%, transparent),
  linear-gradient(90deg, #a8c2e2 0, #6b9ad2 120px, #2d6fbd 250px, #2a73c5 50%, #2465ae 70%, #1b5498 82%, #2e66a8 90%, #86a8d0 100%); }
.logo { width: 15px; height: 15px; }
.win-buttons { display: flex; align-self: flex-start; margin-left: auto; overflow: hidden; height: 19px; border: 1px solid #4d5b73; border-top: 0; border-radius: 0 0 5px 5px; background: linear-gradient(#e3ebf5 0 45%, #a9bcd4 45%, #c6d8ec); }
.win-buttons button { display: grid; place-items: center; width: 27px; border-right: 1px solid #6b7c96; box-shadow: inset 0 0 0 1px rgba(255, 255, 255, .45); }
.win-buttons svg { width: 14px; height: 12px; }
.win-buttons .wide { width: 47px; border-right: 0; }
.win-buttons .close { background: linear-gradient(#e8a598 0 45%, #c63f2b 45%, #d4664e); }
.main-buttons { height: 18px; margin-right: 3px; background: rgba(120, 160, 205, .35); border-color: #3a4f75; }
.main-buttons button { box-shadow: inset 0 0 0 1px rgba(255, 255, 255, .25); }

.menubar { display: flex; flex: none; gap: 14px; height: 22px; padding: 2px 0 0 9px; border-bottom: 1px solid #b9b9b9; }
.toolbar { display: flex; align-items: center; flex: none; height: 39px; padding: 0 0 1px 6px; border-top: 1px solid #fbfbfb; border-bottom: 1px solid #b9b9b9; }
.toolbar.last { height: 38px; padding-bottom: 0; }
.group { display: flex; align-items: center; flex: none; }
.group + .group { margin-left: 8px; }
.group + .far { margin-left: 36px; }
.group + .far.empty { width: 100px; margin-left: 42px; }
.group + .flush { margin-left: 0; }
.grip { width: 6px; height: 29px; background: linear-gradient(#c6c6c6 2px, #fff 2px 3px, transparent 3px) 0 0 / 2px 5px repeat-y, linear-gradient(#c6c6c6 2px, #fff 2px 3px, transparent 3px) 3px 2px / 2px 5px repeat-y; }
.grip-h { display: block; height: 6px; background: linear-gradient(90deg, #c6c6c6 2px, #fff 2px 3px, transparent 3px) 0 0 / 5px 2px repeat-x, linear-gradient(90deg, #c6c6c6 2px, #fff 2px 3px, transparent 3px) 2px 3px / 5px 2px repeat-x; }
.tool { display: flex; align-items: center; width: 35px; height: 34px; padding: 0 6px 0 5px; }
.tool svg { width: 24px; height: 24px; }
.tool.active { width: 34px; margin-right: 1px; border: 1px solid #858585; border-radius: 3px; padding: 0 4px; background: linear-gradient(#cfcfcf, #dcdcdc); }
.drop { display: grid; place-items: center; width: 12px; height: 34px; padding-right: 2px; }
.drop::before { content: ""; border: 5px solid transparent; border-top-color: #000; border-bottom: 0; }
.drop.dim::before { border-top-color: #999; }
.side .drop { margin-left: 2px; }
.sep { flex: none; width: 3px; height: 29px; border-left: 1px solid #b0b0b0; box-shadow: inset 1px 0 #fff; }

.work { display: flex; flex: 1; min-height: 0; }
.side { display: flex; flex-direction: column; flex: none; width: 53px; padding: 7px 0 0; border-right: 2px solid #c0c0c0; }
.side .grip-h { flex: none; width: 42px; height: 5px; margin-left: 5px; }
.side .lower { margin: 9px 0 2px 5px; }
.side-row { display: flex; flex: none; height: 34px; }
.side-tool { display: flex; align-items: center; flex: none; width: 36px; height: 34px; padding-left: 14px; }
.side-tool svg { width: 24px; height: 24px; }
.more { width: 8px; height: 10px; margin: 24px 0 0 16px; }
.more svg { width: 8px; height: 10px; }

.layers { display: flex; flex-direction: column; flex: none; width: 284px; }
.dock-title { display: flex; align-items: center; gap: 9px; height: 20px; padding: 2px 3px 0; }
.dock-title .grip-h { flex: 1; }
.dock-title h2 { font: inherit; }
.dock-space { width: 22px; }
.layer-bar { display: flex; align-items: center; height: 32px; padding: 0 0 6px 1px; }
.layer-bar button { display: grid; place-items: center; width: 32px; height: 26px; }
.layer-bar svg { width: 18px; height: 18px; }
.tree { flex: 1; border: 1px solid #b9b9b9; border-radius: 3px; background: #fff; }
.tree-row { display: flex; align-items: center; height: 18px; padding: 2px 0 0 10px; background: #efefef; }
.branch { width: 10px; height: 9px; margin: 0 3px 7px 0; border: dotted #aaa; border-width: 0 0 1px 1px; }
.symbol { width: 9px; height: 9px; margin: 0 9px 0 10px; border: 1px solid #1d4a5e; border-radius: 50%; background: #2b86a8; }
.tree-row label { font-weight: 700; text-decoration: underline; }
.check { position: relative; flex: none; width: 13px; height: 13px; appearance: none; border: 1px solid #b5b5b5; background: #fff; }
.check:checked::before { content: ""; position: absolute; inset: 1px; background: #000; clip-path: polygon(0 22%, 22% 0, 50% 25%, 78% 0, 100% 22%, 75% 50%, 100% 78%, 78% 100%, 50% 75%, 22% 100%, 0 78%, 25% 50%); }
.canvas { flex: 1; margin: 1px 1px 0 6px; border: 1px solid #b9b9b9; border-radius: 3px; background: #fff; }

.status { display: flex; align-items: center; justify-content: flex-end; flex: none; height: 27px; padding: 2px 1px 0 0; }
.mini { display: grid; place-items: center; width: 20px; height: 20px; border: 1px solid #929292; border-radius: 3px; background: linear-gradient(#fff, #e8e8e8); }
.mini svg { width: 18px; height: 18px; }
.mini.end { margin-left: 6px; }
.coord-label { width: 58px; margin: 0 9px 0 8px; white-space: nowrap; }
.coord { width: 300px; height: 20px; border: 1px solid #b0b0b0; border-radius: 3px; background: #fff; text-align: center; }
.scale-label { width: 27px; margin: 0 11px 0 8px; }
.combo { position: relative; display: flex; width: 87px; height: 20px; margin-right: 6px; }
.combo select { width: 100%; padding-left: 5px; appearance: none; border: 1px solid #b0b0b0; border-radius: 3px; background: linear-gradient(90deg, #fff 70px, #b9b9b9 70px 71px, #f3f3f3 71px); }
.combo::after { content: ""; position: absolute; top: 8px; right: 4px; border: 4px solid transparent; border-top-color: #000; border-bottom: 0; pointer-events: none; }
.render-label { width: 36px; margin: 0 14px 0 4px; }
.epsg { width: 60px; margin-right: 9px; white-space: nowrap; }

.dialog { position: absolute; top: 151px; right: 256px; bottom: 49px; left: 228px; display: flex; flex-direction: column; padding: 0 6px 6px 5px; border: 1px solid #1d2733; border-radius: 7px; background: linear-gradient(90deg, #cfe2f7 0, #b4d6fa 45%, #b4d6fa 80%, #cde3fa 100%); box-shadow: inset 0 0 0 1px rgba(255, 255, 255, .75), 0 3px 8px 2px rgba(0, 0, 0, .6), 0 5px 16px 4px rgba(0, 0, 0, .4); }
.dialog-title { display: flex; align-items: center; flex: none; height: 27px; padding: 0 0 1px 1px; gap: 6px; background: linear-gradient(rgba(150, 185, 220, .1) 20%, rgba(130, 165, 200, .4) 45%, transparent 60%); }
.client { display: flex; flex-direction: column; flex: 1; min-height: 0; border: 1px solid #56687c; background: #efefef; }
.table-bar { display: flex; align-items: center; flex: none; height: 33px; padding: 0 5px 1px 2px; }
.table-bar button { display: flex; align-items: center; width: 31px; height: 28px; padding-left: 6px; }
.table-bar svg { width: 19px; height: 19px; }
.table-bar .faded { opacity: .65; }
.table-bar .sep { width: 6px; height: 26px; border-left: 0; background: linear-gradient(#b0b0b0 0 0) 2px 0 / 1px 100% no-repeat; box-shadow: none; }
.table-bar .question { justify-content: center; width: 18px; margin-left: auto; padding: 0; }
.grid { flex: 1; margin: 0 0 0 1px; border: 1px solid #b9b9b9; border-radius: 3px; background: #fff; }
.grid-head { padding-top: 1px; background: #efefef; }
table { border-spacing: 0; table-layout: fixed; width: 600px; }
th { padding: 0; height: 21px; border: 1px solid #8a8a8a; background: linear-gradient(#fbfbfb, #ebebeb); font-weight: 400; }
.cell { display: flex; align-items: center; }
.cell span { flex: 1; text-align: center; }
.cell svg { width: 12px; height: 10px; margin: 0 7px 4px 0; }
.dialog-foot { display: flex; align-items: center; justify-content: space-between; flex: none; height: 32px; padding: 2px 3px 0 3px; }
.show { position: relative; display: flex; align-items: center; gap: 4px; width: 122px; height: 26px; padding: 0 0 0 6px; border: 1px solid #8c8c8c; border-radius: 3px; background: linear-gradient(#fdfdfd, #e9e9e9); white-space: nowrap; }
.show svg { width: 14px; height: 14px; }
.corner { position: absolute; right: 2px; bottom: 3px; border: 3px solid transparent; border-top-color: #000; border-bottom: 0; }
.views { display: flex; }
.views button { display: grid; place-items: center; width: 26px; height: 26px; border: 1px solid #8c8c8c; border-radius: 3px; background: linear-gradient(#fff, #ececec); }
.views .on { background: #d8d8d8; }
.views svg { width: 17px; height: 17px; }
</style>
